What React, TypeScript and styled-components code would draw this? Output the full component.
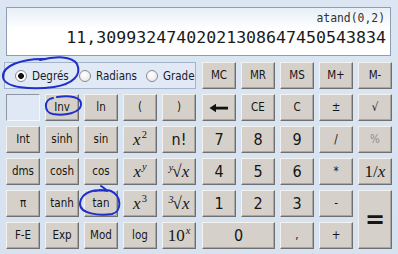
import React from 'react';
import styled, { createGlobalStyle } from 'styled-components';

const GlobalStyle = createGlobalStyle`
    body {
        margin: 0;
        background: #d9e4f1;
    }
`;

const Window = styled.div`
    position: relative;
    width: 398px;
    height: 254px;
    box-sizing: border-box;
    padding: 7px 6px 0 6px;
    background: linear-gradient(#dce6f3, #d6e2f0);
    font-family: 'DejaVu Sans Condensed', 'DejaVu Sans', sans-serif;
    font-stretch: condensed;
    color: #111;
    overflow: hidden;

    * {
        box-sizing: border-box;
    }
`;

const Display = styled.div`
    height: 49px;
    margin-right: 1px;
    border: 1px solid #8f9db2;
    background: linear-gradient(#e8eff8, #ffffff 45%);
    display: flex;
    flex-direction: column;
    align-items: flex-end;
    padding: 3px 5px 0 0;
    font-family: 'DejaVu Sans Mono', 'Liberation Mono', monospace;
    color: #222;
`;

const Expression = styled.div`
    font-size: 11.4px;
    line-height: 15px;
    color: #333;
`;

const Value = styled.div`
    font-size: 16.6px;
    line-height: 24px;
    margin-right: -1px;
    color: #1a1a1a;
`;

const Keypad = styled.div`
    display: flex;
    gap: 6px;
    margin-top: 6px;
`;

const Pad = styled.div`
    display: grid;
    grid-template-columns: repeat(5, 34px);
    grid-auto-rows: 27px;
    gap: 5px;
`;

const ModeBox = styled.div`
    grid-column: 1 / span 5;
    margin-left: -2px;
    border: 1px solid #a3b3c8;
    background: #e0e9f5;
    display: grid;
    grid-template-columns: 64px 67px auto;
    align-items: center;
    padding-left: 10px;
    font-size: 11.5px;
    white-space: nowrap;
`;

const Mode = styled.label`
    display: flex;
    align-items: center;
    gap: 5px;
    color: #1a1a2a;
`;

const Radio = styled.span<{ checked: boolean }>`
    width: 12px;
    height: 12px;
    border-radius: 50%;
    border: 1px solid #8a8a8a;
    background: ${p =>
        p.checked
            ? 'radial-gradient(circle, #111 0 2.6px, #fff 3.2px)'
            : 'radial-gradient(circle at 40% 35%, #ffffff, #e4e4e4)'};
`;

const MemSlot = styled.div`
    border: 1px solid #8d96a3;
    border-right-color: #f4f7fb;
    border-bottom-color: #f4f7fb;
    background: #dfe8f4;
`;

const Button = styled.div<{ size?: 'small' | 'digit' | 'math'; dim?: boolean }>`
    display: flex;
    align-items: center;
    justify-content: center;
    background: #d5d1ca;
    border: 1px solid;
    border-color: #f3f2ef #6f6f6f #6f6f6f #f3f2ef;
    box-shadow: inset -1px -1px 0 #a9a6a0;
    color: ${p => (p.dim ? '#8e8e8e' : '#151515')};
    font-size: ${p => (p.size === 'digit' ? '16px' : p.size === 'math' ? '17px' : '11.5px')};
    font-family: ${p => (p.size === 'math' ? "'Liberation Serif', serif" : 'inherit')};
    white-space: nowrap;
    line-height: 1;
`;

const Label = styled.span`
    display: inline-block;
    position: relative;
`;

const I = styled.i`
    font-style: italic;
`;

const Sup = styled.sup`
    font-size: 10.5px;
    vertical-align: 7px;
    margin-left: 1px;
    line-height: 0;
`;

const Idx = styled.sup`
    font-size: 10px;
    font-style: italic;
    vertical-align: 6px;
    margin-right: -1px;
    line-height: 0;
`;

const Equals = styled.span`
    font-size: 24px;
    font-weight: bold;
    font-family: 'DejaVu Sans', sans-serif;
    font-stretch: normal;
`;

const Ink = styled.svg`
    position: absolute;
    left: 0;
    top: 0;
    pointer-events: none;
    fill: none;
    stroke: #1f2fc8;
    stroke-width: 2;
    stroke-linecap: round;
`;

type Key = {
    label: React.ReactNode;
    size?: 'small' | 'digit' | 'math';
    dim?: boolean;
    col?: string;
    row?: string;
};

const X = () => <I>x</I>;

const Backspace = () => (
    <svg width="20" height="10" viewBox="0 0 20 10" style={{ display: 'block' }}>
        <path d="M0.5 5 L7 0.8 L7 9.2 Z" fill="#111" />
        <rect x="6" y="3.7" width="13" height="2.8" fill="#111" />
    </svg>
);

const leftKeys: Key[] = [
    { label: '', size: 'small' },
    { label: 'Inv' },
    { label: 'ln' },
    { label: '(' },
    { label: ')' },
    { label: 'Int' },
    { label: 'sinh' },
    { label: 'sin' },
    { label: <><X /><Sup>2</Sup></>, size: 'math' },
    { label: 'n!', size: 'digit' },
    { label: 'dms' },
    { label: 'cosh' },
    { label: 'cos' },
    { label: <><X /><Sup><I>y</I></Sup></>, size: 'math' },
    { label: <><Idx>y</Idx>√<X /></>, size: 'math' },
    { label: 'π' },
    { label: 'tanh' },
    { label: 'tan' },
    { label: <><X /><Sup>3</Sup></>, size: 'math' },
    { label: <><Idx>3</Idx>√<X /></>, size: 'math' },
    { label: 'F-E' },
    { label: 'Exp' },
    { label: 'Mod' },
    { label: 'log' },
    { label: <>10<Sup><I>x</I></Sup></>, size: 'math' },
];

const rightKeys: Key[] = [
    { label: 'MC' },
    { label: 'MR' },
    { label: 'MS' },
    { label: 'M+' },
    { label: 'M-' },
    { label: <Backspace /> },
    { label: 'CE' },
    { label: 'C' },
    { label: '±' },
    { label: '√' },
    { label: '7', size: 'digit' },
    { label: '8', size: 'digit' },
    { label: '9', size: 'digit' },
    { label: '/' },
    { label: '%', dim: true },
    { label: '4', size: 'digit' },
    { label: '5', size: 'digit' },
    { label: '6', size: 'digit' },
    { label: '*' },
    { label: <>1/<X /></>, size: 'math' },
    { label: '1', size: 'digit' },
    { label: '2', size: 'digit' },
    { label: '3', size: 'digit' },
    { label: '-' },
    { label: <Equals>=</Equals>, row: '5 / span 2', col: '5' },
    { label: '0', size: 'digit', col: '1 / span 2' },
    { label: ',' },
    { label: '+' },
];

const modes = [
    { label: 'Degrés', checked: true },
    { label: 'Radians', checked: false },
    { label: 'Grade', checked: false },
];

const App: React.FC = () => {
    return (
        <>
            <GlobalStyle />
            <Window>
                <Display>
                    <Expression>atand(0,2)</Expression>
                    <Value>11,30993247402021308647450543834</Value>
                </Display>
                <Keypad>
                    <Pad>
                        <ModeBox>
                            {modes.map(m => (
                                <Mode key={m.label}>
                                    <Radio checked={m.checked} />
                                    {m.label}
                                </Mode>
                            ))}
                        </ModeBox>
                        {leftKeys.map((k, i) =>
                            i === 0 ? (
                                <MemSlot key={i} />
                            ) : (
                                <Button key={i} size={k.size} dim={k.dim}>
                                    <Label>{k.label}</Label>
                                </Button>
                            ),
                        )}
                    </Pad>
                    <Pad>
                        {rightKeys.map((k, i) => (
                            <Button
                                key={i}
                                size={k.size}
                                dim={k.dim}
                                style={{ gridColumn: k.col, gridRow: k.row }}
                            >
                                <Label>{k.label}</Label>
                            </Button>
                        ))}
                    </Pad>
                </Keypad>
                <Ink width="398" height="254" viewBox="0 0 398 254">
                    <path d="M46 59 C22 58 2 66 3 77 C4 88 32 90 54 87 C73 84 82 75 77 64 C72 56 56 56 40 60" />
                    <path d="M53 98 C44 99 43 112 53 114 C65 116 80 113 81 105 C82 97 70 95 57 97" />
                    <path d="M101 186 C104 188 106 190 108 191 C95 189 82 191 80 203 C79 214 100 216 112 214 C122 212 122 196 111 191 C106 189 100 190 95 191" />
                </Ink>
            </Window>
        </>
    );
};

export default App;
